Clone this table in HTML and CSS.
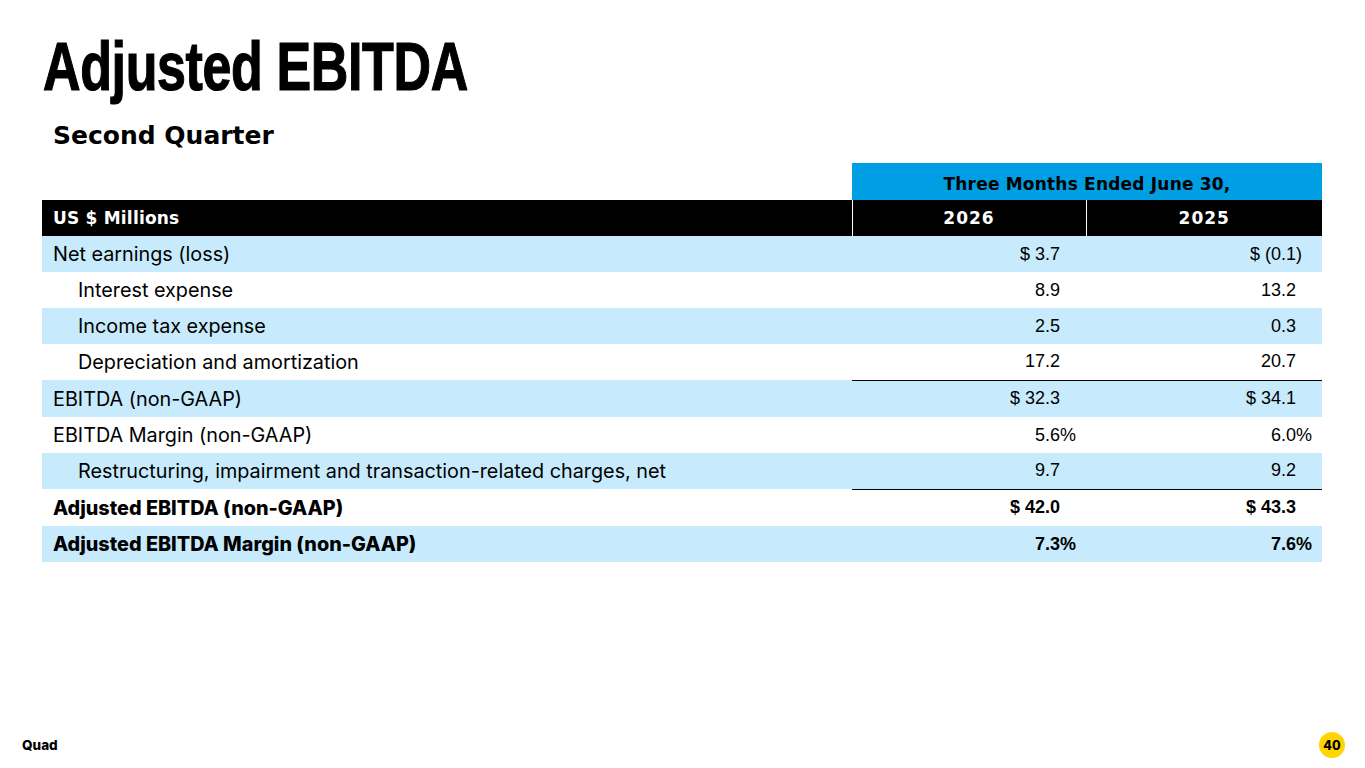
FILE: index.html
```html
<!DOCTYPE html>
<html lang="en">
<head>
<meta charset="utf-8">
<title>Adjusted EBITDA</title>
<link rel="stylesheet" href="styles.css">
</head>
<body>
<div class="slide">
  <h1 class="title">Adjusted EBITDA</h1>
  <h2 class="subtitle">Second Quarter</h2>
  <table class="fin">
    <colgroup>
      <col class="c-label">
      <col class="c-num">
      <col class="c-num2">
    </colgroup>
    <thead>
      <tr class="period">
        <th class="blank"></th>
        <th colspan="2" class="period-cell">Three Months Ended June 30,</th>
      </tr>
      <tr class="years">
        <th class="lbl">US $ Millions</th>
        <th class="yr">2026</th>
        <th class="yr">2025</th>
      </tr>
    </thead>
    <tbody>
      <tr class="shade"><td class="lbl">Net earnings (loss)</td><td class="num">$ 3.7</td><td class="num">$ (0.1<span class="hang">)</span></td></tr>
      <tr><td class="lbl ind">Interest expense</td><td class="num">8.9</td><td class="num">13.2</td></tr>
      <tr class="shade"><td class="lbl ind">Income tax expense</td><td class="num">2.5</td><td class="num">0.3</td></tr>
      <tr><td class="lbl ind">Depreciation and amortization</td><td class="num">17.2</td><td class="num">20.7</td></tr>
      <tr class="shade rule"><td class="lbl">EBITDA (non-GAAP)</td><td class="num">$ 32.3</td><td class="num">$ 34.1</td></tr>
      <tr><td class="lbl">EBITDA Margin (non-GAAP)</td><td class="num">5.6<span class="hang">%</span></td><td class="num">6.0<span class="hang">%</span></td></tr>
      <tr class="shade"><td class="lbl ind">Restructuring, impairment and transaction-related charges, net</td><td class="num">9.7</td><td class="num">9.2</td></tr>
      <tr class="rule strong"><td class="lbl">Adjusted EBITDA (non-GAAP)</td><td class="num">$ 42.0</td><td class="num">$ 43.3</td></tr>
      <tr class="shade strong"><td class="lbl">Adjusted EBITDA Margin (non-GAAP)</td><td class="num">7.3<span class="hang">%</span></td><td class="num">7.6<span class="hang">%</span></td></tr>
    </tbody>
  </table>
  <footer class="foot">
    <span class="brand">Quad</span>
    <span class="pageno">40</span>
  </footer>
</div>
</body>
</html>
```
FILE: styles.css
```css
html, body {
  margin: 0;
  padding: 0;
  background: #ffffff;
}
.slide {
  position: relative;
  width: 1365px;
  height: 768px;
  box-sizing: border-box;
  padding: 28px 43px 0 42px;
  font-family: Inter, "Liberation Sans", sans-serif;
  color: #000;
  overflow: hidden;
}
.title {
  margin: 0 0 0 1px;
  font-family: "Liberation Sans", Arial, sans-serif;
  font-weight: 700;
  font-size: 68px;
  line-height: 76px;
  letter-spacing: -0.5px;
  -webkit-text-stroke: 1.2px #000;
  transform: scaleX(0.765);
  transform-origin: left center;
  white-space: nowrap;
}
.subtitle {
  margin: 17px 0 0 11px;
  font-family: "DejaVu Sans", sans-serif;
  font-weight: 700;
  font-size: 25px;
  line-height: 30px;
  letter-spacing: 0;
}
.fin {
  margin-top: 12px;
  width: 1280px;
  border-collapse: collapse;
  table-layout: fixed;
}
.c-label { width: 810px; }
.c-num { width: 234px; }
.c-num2 { width: 236px; }
.fin th, .fin td {
  padding: 0;
  height: 36px;
  box-sizing: border-box;
}
.period th { height: 37px; }
.fin .rule td { height: 37px; }
.period-cell {
  background: #009fe3;
  font-family: "DejaVu Sans", sans-serif;
  font-weight: 700;
  font-size: 17px;
  text-align: center;
  letter-spacing: 0.2px;
  padding-top: 4px !important;
}
.period .blank { background: transparent; }
.years th {
  background: #000;
  color: #fff;
  font-family: "DejaVu Sans", sans-serif;
  font-weight: 700;
  font-size: 17px;
  letter-spacing: 0.2px;
}
.years .yr {
  text-align: center;
  border-left: 1px solid #fff;
  letter-spacing: 1px;
}
.years .lbl { text-align: left; }
.lbl {
  padding-left: 11px !important;
  font-size: 19.8px;
  text-align: left;
  letter-spacing: 0;
}
.ind { padding-left: 36px !important; }
.num {
  font-family: "Liberation Sans", Arial, sans-serif;
  font-size: 18px;
  text-align: right;
  padding-right: 26px !important;
}
.hang {
  display: inline-block;
  width: 0;
  overflow: visible;
  white-space: nowrap;
}
.shade td { background: #c7ebfc; }
.rule td.num { border-top: 1px solid #000; }
.strong td { font-weight: 700; }
.strong .lbl { font-weight: 800; letter-spacing: 0; }
.foot {
  position: absolute;
  left: 22px;
  right: 20px;
  bottom: 10px;
  display: flex;
  justify-content: space-between;
  align-items: center;
}
.brand {
  font-family: Inter, sans-serif;
  font-weight: 800;
  font-size: 13.5px;
  letter-spacing: 0;
}
.pageno {
  width: 26px;
  height: 26px;
  border-radius: 50%;
  background: #ffd500;
  display: flex;
  align-items: center;
  justify-content: center;
  font-weight: 800;
  font-size: 12.5px;
}
```
